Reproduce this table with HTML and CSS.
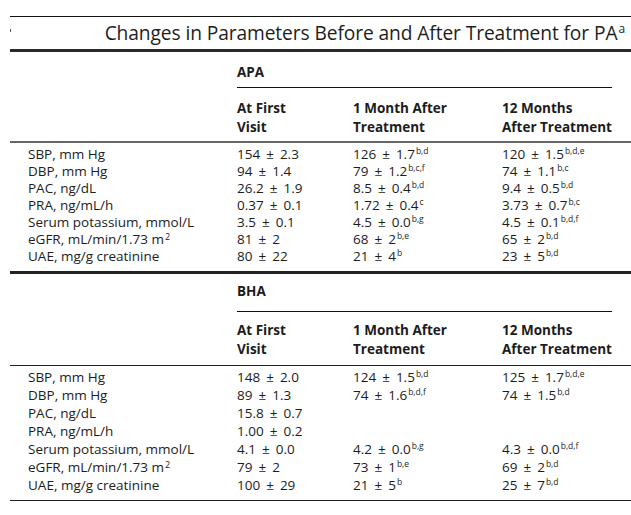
FILE: index.html
```html
<!DOCTYPE html>
<html lang="en">
<head>
<meta charset="utf-8">
<title>Changes in Parameters Before and After Treatment for PA</title>
<link rel="stylesheet" href="styles.css">
</head>
<body>
<div class="page">
  <div class="rule-top"></div>
  <div class="title-row">
    <span class="tick"></span>
    <h1 class="title">Changes in Parameters Before and After Treatment for PA<sup>a</sup></h1>
  </div>
  <div class="rule-thick"></div>

  <section class="group">
    <div class="group-head"><div class="group-name">APA</div></div>
    <div class="col-heads">
      <div></div>
      <div>At First<br>Visit</div>
      <div>1 Month After<br>Treatment</div>
      <div>12 Months<br>After Treatment</div>
    </div>
    <div class="rows">
      <div class="row"><div>SBP, mm Hg</div><div>154 ± 2.3</div><div>126 ± 1.7<sup>b,d</sup></div><div>120 ± 1.5<sup>b,d,e</sup></div></div>
      <div class="row"><div>DBP, mm Hg</div><div>94 ± 1.4</div><div>79 ± 1.2<sup>b,c,f</sup></div><div>74 ± 1.1<sup>b,c</sup></div></div>
      <div class="row"><div>PAC, ng/dL</div><div>26.2 ± 1.9</div><div>8.5 ± 0.4<sup>b,d</sup></div><div>9.4 ± 0.5<sup>b,d</sup></div></div>
      <div class="row"><div>PRA, ng/mL/h</div><div>0.37 ± 0.1</div><div>1.72 ± 0.4<sup>c</sup></div><div>3.73 ± 0.7<sup>b,c</sup></div></div>
      <div class="row"><div>Serum potassium, mmol/L</div><div>3.5 ± 0.1</div><div>4.5 ± 0.0<sup>b,g</sup></div><div>4.5 ± 0.1<sup>b,d,f</sup></div></div>
      <div class="row"><div>eGFR, mL/min/1.73 m<sup class="sq">2</sup></div><div>81 ± 2</div><div>68 ± 2<sup>b,e</sup></div><div>65 ± 2<sup>b,d</sup></div></div>
      <div class="row"><div>UAE, mg/g creatinine</div><div>80 ± 22</div><div>21 ± 4<sup>b</sup></div><div>23 ± 5<sup>b,d</sup></div></div>
    </div>
  </section>

  <section class="group second">
    <div class="group-head"><div class="group-name">BHA</div></div>
    <div class="col-heads">
      <div></div>
      <div>At First<br>Visit</div>
      <div>1 Month After<br>Treatment</div>
      <div>12 Months<br>After Treatment</div>
    </div>
    <div class="rows">
      <div class="row"><div>SBP, mm Hg</div><div>148 ± 2.0</div><div>124 ± 1.5<sup>b,d</sup></div><div>125 ± 1.7<sup>b,d,e</sup></div></div>
      <div class="row"><div>DBP, mm Hg</div><div>89 ± 1.3</div><div>74 ± 1.6<sup>b,d,f</sup></div><div>74 ± 1.5<sup>b,d</sup></div></div>
      <div class="row"><div>PAC, ng/dL</div><div>15.8 ± 0.7</div><div></div><div></div></div>
      <div class="row"><div>PRA, ng/mL/h</div><div>1.00 ± 0.2</div><div></div><div></div></div>
      <div class="row"><div>Serum potassium, mmol/L</div><div>4.1 ± 0.0</div><div>4.2 ± 0.0<sup>b,g</sup></div><div>4.3 ± 0.0<sup>b,d,f</sup></div></div>
      <div class="row"><div>eGFR, mL/min/1.73 m<sup class="sq">2</sup></div><div>79 ± 2</div><div>73 ± 1<sup>b,e</sup></div><div>69 ± 2<sup>b,d</sup></div></div>
      <div class="row"><div>UAE, mg/g creatinine</div><div>100 ± 29</div><div>21 ± 5<sup>b</sup></div><div>25 ± 7<sup>b,d</sup></div></div>
    </div>
  </section>
</div>
</body>
</html>
```

FILE: styles.css
```css
html, body {
  margin: 0;
  padding: 0;
  background: #fff;
}

body {
  font-family: "Open Sans", "Noto Sans", "DejaVu Sans", sans-serif;
  color: #1c1c1c;
}

.page {
  width: 621px;
  margin-left: 10px;
  padding-top: 16px;
}

.rule-top {
  border-top: 1px solid #111;
}

.title-row {
  display: flex;
  align-items: center;
  height: 32px;
}

.tick {
  width: 1px;
  height: 3px;
  background: #555;
  margin-top: -6px;
}

.title {
  flex: 1;
  margin: 0;
  text-align: right;
  padding-right: 6px;
  font-size: 19.2px;
  font-weight: 400;
  line-height: 24px;
  color: #1e1e1e;
  letter-spacing: -0.1px;
}

.title sup {
  font-size: 12px;
  line-height: 0;
  vertical-align: 7px;
  margin-left: 1px;
}

.rule-thick {
  height: 3px;
  background: #2a2a2a;
}

.group-head {
  height: 37px;
  padding-left: 227px;
  padding-right: 19px;
}

.group-name {
  height: 36px;
  border-bottom: 1px solid #111;
  font-weight: 700;
  font-size: 13.5px;
  line-height: 20px;
  padding-top: 10px;
  box-sizing: border-box;
}

.second .group-head {
  height: 38px;
}

.second .group-name {
  height: 38px;
  padding-top: 7px;
}

.col-heads {
  display: grid;
  grid-template-columns: 227px 116px 149px 1fr;
  font-weight: 700;
  font-size: 13.5px;
  line-height: 19px;
  padding-top: 10px;
  padding-bottom: 4px;
  border-bottom: 2px solid #666;
}

.second .col-heads {
  padding-top: 9px;
  padding-bottom: 6px;
  border-bottom: 1.5px solid #222;
}

.rows {
  padding-top: 3px;
  padding-bottom: 6px;
  border-bottom: 3px solid #222;
}

.second .rows {
  padding-top: 2px;
  padding-bottom: 6px;
  border-bottom: 1.5px solid #222;
}

.row {
  display: grid;
  grid-template-columns: 227px 116px 149px 1fr;
  font-size: 13.5px;
  line-height: 17px;
  white-space: nowrap;
}

.row > div {
  word-spacing: 2.5px;
}

.second .row {
  line-height: 18px;
}

.row > div:first-child {
  padding-left: 18px;
  word-spacing: 0;
}

.row sup {
  font-size: 8.5px;
  line-height: 0;
  vertical-align: 5px;
  margin-left: 1px;
  word-spacing: 0;
}

.row sup.sq {
  font-size: 9px;
  vertical-align: 4px;
}
```
